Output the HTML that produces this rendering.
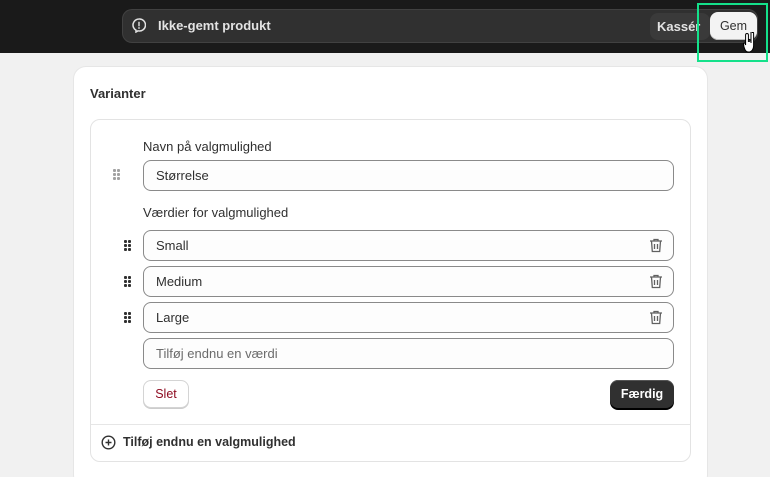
<!DOCTYPE html>
<html style="width:770px;height:477px;overflow:hidden"><head><style>
*{box-sizing:border-box;margin:0;padding:0}
body{width:770px;height:477px;background:#f1f1f1;font-family:"Liberation Sans",sans-serif;font-size:13px;color:#303030;position:relative;overflow:hidden}
.top{position:absolute;left:0;top:0;width:770px;height:53px;background:#1a1a1a}
.pill{position:absolute;left:122px;top:9px;width:636px;height:34px;background:#303030;border:1px solid #414141;border-radius:10px}
.abs{position:absolute}
.card{position:absolute;left:74px;top:67px;width:633px;height:420px;background:#fff;border-radius:12px;box-shadow:0 0 0 1px #e6e6e6}
.box{position:absolute;left:90px;top:119px;width:601px;height:343px;border:1px solid #e3e3e3;border-radius:10px;background:#fff}
.inp{position:absolute;left:143px;width:531px;height:31px;border:1px solid #8a8a8a;border-radius:8px;background:#fdfdfd;padding-left:12px;line-height:29px;font-size:13px;color:#303030}
.grip{position:absolute;width:8px;height:12px}
.grip i{position:absolute;width:2.5px;height:2.5px;background:#303030;border-radius:1px}
.trash{position:absolute;left:649px}
</style></head><body>
<div class="top"></div>
<div class="pill"></div>
<svg class="abs" style="left:132px;top:18px" width="14" height="15" viewBox="0 0 14 15"><path d="M7 1a6 6 0 0 0-3 11.2V14l2-1.2A6 6 0 1 0 7 1z" fill="none" stroke="#e3e3e3" stroke-width="1.5"/><rect x="6.3" y="3.8" width="1.4" height="4.5" fill="#e3e3e3"/><circle cx="7" cy="10" r=".9" fill="#e3e3e3"/></svg>
<div class="abs" style="left:158px;top:18px;color:#e3e3e3;font-weight:bold;font-size:13px">Ikke-gemt produkt</div>
<div class="abs" style="left:650px;top:13px;width:60px;height:27px;background:#3a3a3a;border-radius:8px;color:#e3e3e3;font-weight:bold;line-height:27px;padding-left:7px;overflow:hidden">Kassér</div>
<div class="abs" style="left:710px;top:12px;width:47px;height:28px;background:#f3f3f3;border-radius:8px;color:#303030;line-height:28px;text-align:center;font-size:12.5px;box-shadow:inset 0 -1px 0 #bbb">Gem</div>
<div class="abs" style="left:697px;top:3px;width:71px;height:59px;border:2px solid #14e08a"></div>
<svg class="abs" style="left:743px;top:32px" width="16" height="22" viewBox="0 0 16 22"><path d="M4 1.5c.8 0 1.4.6 1.4 1.4V10V8c0-.8 1.3-.8 1.3 0v2-1.5c0-.8 1.3-.8 1.3 0V11-0.5c0-.8 1.3-.8 1.3 0v.5l0 1c0-.8 1.3-.8 1.3 0V14c0 3-2 6-5 6S2 18 1 15l-.5-3c-.2-1 1-1.4 1.6-.4L2.6 13V2.9c0-.8.6-1.4 1.4-1.4z" fill="#fff" stroke="#000" stroke-width="1"/></svg>
<div class="card"></div>
<div class="abs" style="left:90px;top:86px;font-weight:bold;font-size:13px;color:#303030">Varianter</div>
<div class="box"></div>
<div class="abs" style="left:143px;top:139px">Navn på valgmulighed</div>
<div class="grip" style="left:113px;top:169px;opacity:.45"><i style="left:0;top:0"></i><i style="left:4px;top:0"></i><i style="left:0;top:4px"></i><i style="left:4px;top:4px"></i><i style="left:0;top:8px"></i><i style="left:4px;top:8px"></i></div>
<div class="inp" style="top:160px">Størrelse</div>
<div class="abs" style="left:143px;top:205px">Værdier for valgmulighed</div>
<div class="grip" style="left:124px;top:240px"><i style="left:0;top:0"></i><i style="left:4px;top:0"></i><i style="left:0;top:4px"></i><i style="left:4px;top:4px"></i><i style="left:0;top:8px"></i><i style="left:4px;top:8px"></i></div>
<div class="inp" style="top:230px">Small</div>
<div class="grip" style="left:124px;top:276px"><i style="left:0;top:0"></i><i style="left:4px;top:0"></i><i style="left:0;top:4px"></i><i style="left:4px;top:4px"></i><i style="left:0;top:8px"></i><i style="left:4px;top:8px"></i></div>
<div class="inp" style="top:266px">Medium</div>
<div class="grip" style="left:124px;top:312px"><i style="left:0;top:0"></i><i style="left:4px;top:0"></i><i style="left:0;top:4px"></i><i style="left:4px;top:4px"></i><i style="left:0;top:8px"></i><i style="left:4px;top:8px"></i></div>
<div class="inp" style="top:302px">Large</div>
<svg class="trash" style="top:238px" width="14" height="15" viewBox="0 0 14 15"><path d="M1 3h12M5 3V1.5h4V3M2.5 3l.8 10.5h7.4L11.5 3M5.5 6v5M8.5 6v5" fill="none" stroke="#616161" stroke-width="1.3"/></svg>
<svg class="trash" style="top:274px" width="14" height="15" viewBox="0 0 14 15"><path d="M1 3h12M5 3V1.5h4V3M2.5 3l.8 10.5h7.4L11.5 3M5.5 6v5M8.5 6v5" fill="none" stroke="#616161" stroke-width="1.3"/></svg>
<svg class="trash" style="top:310px" width="14" height="15" viewBox="0 0 14 15"><path d="M1 3h12M5 3V1.5h4V3M2.5 3l.8 10.5h7.4L11.5 3M5.5 6v5M8.5 6v5" fill="none" stroke="#616161" stroke-width="1.3"/></svg>
<div class="inp" style="top:338px;color:#6b6b6b">Tilføj endnu en værdi</div>
<div class="abs" style="left:143px;top:380px;width:46px;height:28px;border:1px solid #d4d4d4;border-radius:8px;background:#fff;color:#8e0b21;text-align:center;line-height:26px;font-size:12.5px;box-shadow:0 1px 0 #ccc">Slet</div>
<div class="abs" style="left:610px;top:380px;width:64px;height:28px;border-radius:8px;background:#303030;color:#fff;font-weight:bold;text-align:center;line-height:28px;font-size:12.5px;box-shadow:0 2px 0 #000,inset 0 1px 0 #555">Færdig</div>
<div class="abs" style="left:91px;top:424px;width:599px;height:1px;background:#e6e6e6"></div>
<svg class="abs" style="left:101px;top:435px" width="15" height="15" viewBox="0 0 15 15"><circle cx="7.5" cy="7.5" r="6.3" fill="none" stroke="#303030" stroke-width="1.4"/><path d="M7.5 4.5v6M4.5 7.5h6" stroke="#303030" stroke-width="1.4"/></svg>
<div class="abs" style="left:123px;top:435px;font-weight:bold;font-size:12.5px">Tilføj endnu en valgmulighed</div>
</body></html>
